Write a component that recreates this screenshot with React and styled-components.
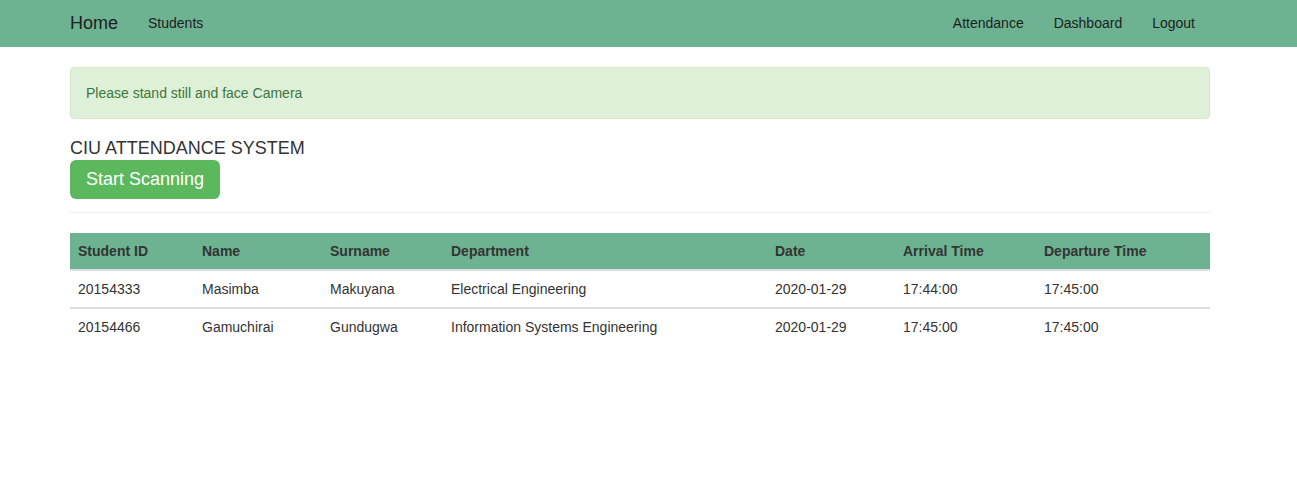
import React from "react";
import styled, { createGlobalStyle } from "styled-components";

const GlobalStyle = createGlobalStyle`
  * { box-sizing: border-box; }
  body {
    margin: 0;
    font-family: "Liberation Sans", Arial, sans-serif;
    font-size: 14px;
    line-height: 1.42857;
    color: #333;
    background: #fff;
  }
`;

const Container = styled.div`
  width: 1140px;
  margin-left: 70px;
`;

const Navbar = styled.nav`
  background: #6db392;
  height: 47px;
`;

const NavInner = styled(Container)`
  display: flex;
  align-items: center;
  height: 100%;
  padding-bottom: 2px;
`;

const NavGroup = styled.ul`
  display: flex;
  list-style: none;
  margin: 0;
  padding: 0;
  margin-left: ${({ $right }) => ($right ? "auto" : "0")};
`;

const Brand = styled.a`
  font-size: 18px;
  color: #1d1d1d;
  text-decoration: none;
  padding-right: 15px;
  line-height: 20px;
`;

const NavLink = styled.a`
  display: block;
  padding: 0 15px;
  font-size: 14px;
  color: #1d1d1d;
  text-decoration: none;
  line-height: 20px;
`;

const Main = styled(Container)`
  padding-top: 20px;
`;

const Alert = styled.div`
  background: #dff0d8;
  border: 1px solid #d6e9c6;
  color: #3c763d;
  border-radius: 4px;
  padding: 15px;
  line-height: 20px;
  margin-bottom: 19px;
`;

const Title = styled.h4`
  font-size: 18px;
  font-weight: 500;
  line-height: 20px;
  margin: 0 0 2px;
  color: #333;
`;

const Button = styled.button`
  font-family: inherit;
  font-size: 18px;
  line-height: 27px;
  padding: 6px 16px;
  color: #fff;
  background: #5cb85c;
  border: 0;
  border-radius: 6px;
  cursor: pointer;
`;

const Rule = styled.hr`
  border: 0;
  border-top: 1px solid #eee;
  margin: 13px 0 20px;
`;

const Table = styled.table`
  width: 100%;
  border-collapse: collapse;
  border-spacing: 0;
`;

const Th = styled.th`
  text-align: left;
  font-weight: bold;
  padding: 8px;
  line-height: 20px;
  background: #6db392;
  border-bottom: 2px solid #ddd;
  color: #333;
  width: ${({ $w }) => $w}px;
`;

const Td = styled.td`
  padding: 8px;
  line-height: 20px;
  color: #333;
`;

const Row = styled.tr`
  & + & td {
    border-top: 2px solid #ddd;
  }
`;

const columns = [
  ["Student ID", 124],
  ["Name", 128],
  ["Surname", 121],
  ["Department", 324],
  ["Date", 128],
  ["Arrival Time", 141],
  ["Departure Time", 174],
];

const records = [
  ["20154333", "Masimba", "Makuyana", "Electrical Engineering", "2020-01-29", "17:44:00", "17:45:00"],
  ["20154466", "Gamuchirai", "Gundugwa", "Information Systems Engineering", "2020-01-29", "17:45:00", "17:45:00"],
];

export default function App() {
  return (
    <>
      <GlobalStyle />
      <Navbar>
        <NavInner>
          <Brand href="#">Home</Brand>
          <NavGroup>
            <li><NavLink href="#">Students</NavLink></li>
          </NavGroup>
          <NavGroup $right>
            <li><NavLink href="#">Attendance</NavLink></li>
            <li><NavLink href="#">Dashboard</NavLink></li>
            <li><NavLink href="#">Logout</NavLink></li>
          </NavGroup>
        </NavInner>
      </Navbar>
      <Main>
        <Alert>Please stand still and face Camera</Alert>
        <Title>CIU ATTENDANCE SYSTEM</Title>
        <Button>Start Scanning</Button>
        <Rule />
        <Table>
          <thead>
            <tr>
              {columns.map(([label, w]) => (
                <Th key={label} $w={w}>{label}</Th>
              ))}
            </tr>
          </thead>
          <tbody>
            {records.map((r) => (
              <Row key={r[0]}>
                {r.map((cell, i) => (
                  <Td key={i}>{cell}</Td>
                ))}
              </Row>
            ))}
          </tbody>
        </Table>
      </Main>
    </>
  );
}
